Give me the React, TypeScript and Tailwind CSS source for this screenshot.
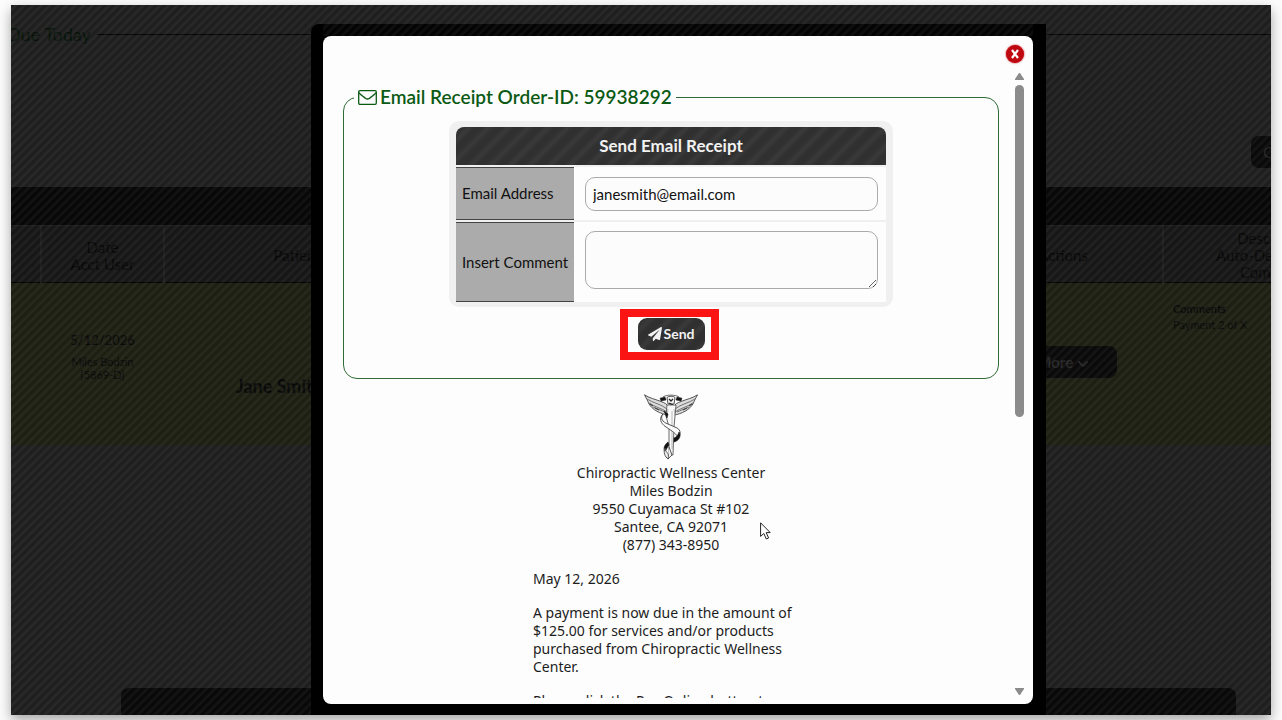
import type { ReactNode } from "react";
import { FaPaperPlane, FaChevronDown } from "react-icons/fa";

const stripes =
  "bg-[repeating-linear-gradient(135deg,rgba(255,255,255,0.01)_0px,rgba(255,255,255,0.01)_1px,rgba(255,255,255,0.065)_4px,rgba(255,255,255,0.01)_6px)]";
const wideStripes =
  "bg-[repeating-linear-gradient(135deg,#303030_0px,#303030_5px,#393939_9px,#393939_10px,#303030_14px)]";

function HeadCell({ children }: { children?: ReactNode }) {
  return (
    <th className="h-14 border-r-2 border-b border-r-[#1b1b1d] border-b-black bg-[#131314] p-0 pt-1 text-center text-[15px] leading-[17px] font-normal whitespace-nowrap text-[#030303]">
      {children}
    </th>
  );
}

function Backdrop() {
  return (
    <div className="flex h-full flex-col bg-[#1b1b1b] text-[#050505]">
      <div className="flex h-[58px] items-center gap-1.5 text-lg">
        <h1 className="-ml-1 text-[#041006]">Due Today</h1>
        <div className="h-px flex-1 bg-black" />
      </div>
      <div className="flex flex-1 flex-col">
        <div className="flex h-[124px] items-end justify-end pb-[19px]">
          <button aria-label="Calendar" className="h-8 w-5 rounded-l-lg bg-[#060606] pl-3 text-[#222]">
            C
          </button>
        </div>
        <div className="h-[38px] bg-[#040404]" />
        <table className="mt-px w-[calc(100%+118px)] table-fixed border-collapse">
          <colgroup>
            <col className="w-[30px]" />
            <col className="w-[123px]" />
            <col className="w-[266px]" />
            <col />
            <col className="w-[200px]" />
            <col className="w-[225px]" />
          </colgroup>
          <thead>
            <tr>
              <HeadCell />
              <HeadCell>
                Date
                <br />
                Acct User
              </HeadCell>
              <HeadCell>Patient</HeadCell>
              <HeadCell />
              <HeadCell>Actions</HeadCell>
              <HeadCell>
                Description
                <br />
                Auto-Debit Status
                <br />
                Comments
              </HeadCell>
            </tr>
          </thead>
          <tbody>
            <tr className="h-[163px] bg-[#1a1c0f] text-center">
              <td />
              <td className="p-0 pb-3 text-[11px] leading-[13px]">
                <p className="pb-2 text-[13px]">5/12/2026</p>
                Miles Bodzin
                <br />
                [5869-D]
              </td>
              <td className="p-0 pt-11 text-lg font-bold">Jane Smith (42)</td>
              <td />
              <td className="p-0 pb-1">
                <button className="h-8 w-[108px] rounded-lg bg-[#060606] text-[15px] font-bold text-[#222]">
                  More <FaChevronDown className="inline" size={12} />
                </button>
              </td>
              <td className="p-0 pt-[18px] pl-2.5 text-left align-top text-[11px] leading-4">
                <b>Comments</b>
                <br />
                Payment 2 of X
              </td>
            </tr>
          </tbody>
        </table>
      </div>
      <div className="mr-[35px] ml-[110px] h-[27px] rounded-t-lg bg-[#050505]" />
    </div>
  );
}

function Emblem() {
  return (
    <svg viewBox="0 0 54 66" className="mx-auto h-[66px] w-[54px]" fill="none" stroke="#444" strokeLinejoin="round" aria-label="Chiropractic emblem">
      <path d="M0.5 0.8C5 4 12 5.5 17 7.5C21 9 23 10 24.5 13L24 21C17 20 8 16 4.5 9C4 7 2 4 0.5 0.8Z" fill="#ddd" strokeWidth="0.9" />
      <path d="M53.5 0.8C49 4 42 5.5 37 7.5C33 9 31 10 29.5 13L30 21C37 20 46 16 49.5 9C50 7 52 4 53.5 0.8Z" fill="#ddd" strokeWidth="0.9" />
      <path d="M3 5C9 9 17 10 23 15M5 9C11 13 17 14 23 18M9 13L21 18M51 5C45 9 37 10 31 15M49 9C43 13 37 14 31 18M45 13L33 18" strokeWidth="0.9" stroke="#666" />
      <path d="M6 10L9 12M11 14L15 16M48 10L45 12M43 14L39 16" strokeWidth="1.2" />
      <path d="M19 3C22 0.5 32 0.5 35 3" strokeWidth="0.8" />
      <path d="M16 4.2L21 3L22 6L17 7ZM38 4.2L33 3L32 6L37 7Z" fill="#151515" stroke="#151515" strokeWidth="0.5" />
      <path d="M23 3.5C24 1.8 30 1.8 31 3.5L30 10H24Z" fill="#f2f2f2" strokeWidth="0.9" />
      <path d="M25 5L27 7L29 5M25 9L29 11" strokeWidth="1.2" stroke="#222" />
      <path d="M23 11H32L31 22L30 33L29 61L25 61L25 33L22 22Z" fill="#fafafa" strokeWidth="0.8" />
      <path d="M24 15L23 22M30 15L31 22M28 17V55" strokeWidth="0.7" stroke="#999" />
      <path d="M20 17L24 20L23 24Z" fill="#111" stroke="#111" strokeWidth="0.6" />
      <path d="M19 20C16 24 18 28 24 30L33 34C37 36 37 41 34 44C33 40 28 37 22 33C16 29 15 24 19 20Z" fill="#fafafa" strokeWidth="0.9" />
      <path d="M35 38C38 43 34 47 30 48L30 44C33 43 34 41 35 38Z" fill="#111" stroke="#111" strokeWidth="0.6" />
      <path d="M24 48C20 51 19 55 21 58L23 54L25 51Z" fill="#111" stroke="#111" strokeWidth="0.6" />
      <path d="M21 54C21 59 26 58 24 65C21 63 19 58 21 54ZM25 53L28 61L24 65" fill="#eee" strokeWidth="0.9" />
    </svg>
  );
}

function EnvelopeIcon() {
  return (
    <svg viewBox="0 0 19 15" className="h-[15px] w-[19px]" fill="none" stroke="currentColor" strokeWidth="1.3" strokeLinejoin="round" aria-hidden="true">
      <rect x="0.7" y="0.7" width="17.6" height="13.6" rx="1.2" />
      <path d="M0.9 2.6C1.5 3.7 4.8 6.2 7.4 8.2C8.9 9.4 10.1 9.4 11.6 8.2C14.2 6.2 17.5 3.7 18.1 2.6" />
    </svg>
  );
}

function ReceiptForm() {
  const label =
    "w-[118px] border-y border-[#444] bg-[#ababab] p-0 pl-1.5 text-left text-[15px] font-normal whitespace-nowrap text-[#111]";
  const field =
    "block w-full rounded-[10px] border border-[#aaa] bg-[#fcfcfc] px-[7px] text-[15px] text-[#111] outline-none";
  return (
    <fieldset className="mx-[13px] rounded-[14px] border border-[#2f6b35] pb-7">
      <legend className="ml-2.5 flex h-[26px] items-center gap-[3px] px-1 text-[19px] font-semibold text-[#0b5a14]">
        <EnvelopeIcon />
        Email Receipt Order-ID: 59938292
      </legend>
      <div className="mx-auto mt-[11px] w-[444px] rounded-[10px] bg-[#f0f0f0] px-[7px] pt-1 pb-[3px]">
        <table className="w-full table-fixed border-separate border-spacing-x-0 border-spacing-y-[2px]">
          <colgroup>
            <col className="w-[118px]" />
            <col />
          </colgroup>
          <thead>
            <tr>
              <th colSpan={2} className={`h-[38px] rounded-t-lg p-0 text-[17px] font-bold text-[#f2f2f2] ${wideStripes}`}>
                Send Email Receipt
              </th>
            </tr>
          </thead>
          <tbody>
            <tr>
              <th className={`h-[53px] ${label}`}>
                <label htmlFor="email">Email Address</label>
              </th>
              <td className="bg-[#fdfdfd] p-0 pr-2 pl-[11px]">
                <input id="email" type="email" defaultValue="janesmith@email.com" className={`h-[34px] ${field}`} />
              </td>
            </tr>
            <tr>
              <th className={`h-20 ${label}`}>
                <label htmlFor="comment">Insert Comment</label>
              </th>
              <td className="bg-[#fdfdfd] p-0 pr-2 pb-1 pl-[11px]">
                <textarea id="comment" className={`h-[58px] resize-y ${field}`} />
              </td>
            </tr>
          </tbody>
        </table>
      </div>
      <div className="mt-[11px] flex justify-center">
        <div className="relative">
          <button
            type="button"
            className={`flex h-8 w-[67px] items-center justify-center gap-0.5 rounded-[9px] text-sm font-bold text-[#f2f2f2] ${wideStripes}`}
          >
            <FaPaperPlane size={14} />
            Send
          </button>
          <div className="pointer-events-none absolute -top-[9px] -right-[14px] -bottom-[10px] -left-[18px] border-8 border-[#fb1414]" />
        </div>
      </div>
    </fieldset>
  );
}

function ReceiptLetter() {
  return (
    <article className="mx-auto mt-[15px] flex w-[276px] flex-col gap-4 font-['Noto_Sans',sans-serif] text-sm leading-[18px] text-[#1c1c1c]">
      <header className="text-center">
        <Emblem />
        <address className="mt-1 not-italic">
          Chiropractic Wellness Center
          <br />
          Miles Bodzin
          <br />
          9550 Cuyamaca St #102
          <br />
          Santee, CA 92071
          <br />
          (877) 343-8950
        </address>
      </header>
      <p>May 12, 2026</p>
      <p>
        A payment is now due in the amount of $125.00 for services and/or products purchased from Chiropractic
        Wellness Center.
      </p>
      <p>Please click the Pay Online button to</p>
    </article>
  );
}

function ScrollRail() {
  return (
    <div className="flex w-[15px] flex-col items-center pt-[5px] pb-[3px]" aria-hidden="true">
      <svg viewBox="0 0 9 7" className="h-[7px] w-[9px]" fill="#8b8b8b">
        <path d="M4 0h1L9 6v1H0V6z" />
      </svg>
      <div className="mt-[5px] h-[332px] w-[9px] rounded-full bg-[#8b8b8b]" />
      <svg viewBox="0 0 9 7" className="mt-auto h-[7px] w-[9px]" fill="#8b8b8b">
        <path d="M4 7h1L9 1V0H0V1z" />
      </svg>
    </div>
  );
}

function Modal() {
  return (
    <section
      role="dialog"
      aria-label="Email receipt"
      className="absolute top-[19px] right-[225px] bottom-0 left-[300px] flex flex-col rounded-tl-lg bg-black pr-[13px] pb-[11px] pl-3"
    >
      <div className={`h-3 shrink-0 ${stripes}`} />
      <div className="flex min-h-0 flex-1 flex-col rounded-lg bg-[#fdfdfd] pr-1.5 pb-1.5 pl-[7px]">
        <div className="flex h-8 shrink-0 items-end justify-end pr-[3px] pb-[5px]">
          <button
            aria-label="Close"
            className="flex size-[18px] items-center justify-center rounded-full bg-[#c00810] shadow-[0_0_2px_#c00810]"
          >
            <svg viewBox="0 0 10 10" className="size-[10px]" stroke="#fff" strokeWidth="2.2">
              <path d="M2 1L8 9M8 1L2 9" />
            </svg>
          </button>
        </div>
        <div className="flex min-h-0 flex-1">
          <div className="min-w-0 flex-1 overflow-hidden pt-4">
            <ReceiptForm />
            <ReceiptLetter />
          </div>
          <ScrollRail />
        </div>
      </div>
    </section>
  );
}

export default function App() {
  return (
    <div className="h-screen overflow-hidden bg-[#fcfcfc] px-[11px] py-[5px] font-[Lato,sans-serif]">
      <main className="relative h-full shadow-[0_5px_12px_rgba(0,0,0,0.35)]">
        <div className="h-full overflow-hidden">
          <Backdrop />
        </div>
        <div className={`pointer-events-none absolute inset-0 ${stripes}`} />
        <Modal />
        <svg viewBox="0 0 11 18" className="absolute top-[517px] left-[749px] h-[18px] w-[11px]" fill="#fff" stroke="#222" aria-hidden="true">
          <path d="M0.6 0.8V14.4L3.8 11.5L6.3 17L8.6 16L6.2 10.6H10.2Z" />
        </svg>
      </main>
    </div>
  );
}
